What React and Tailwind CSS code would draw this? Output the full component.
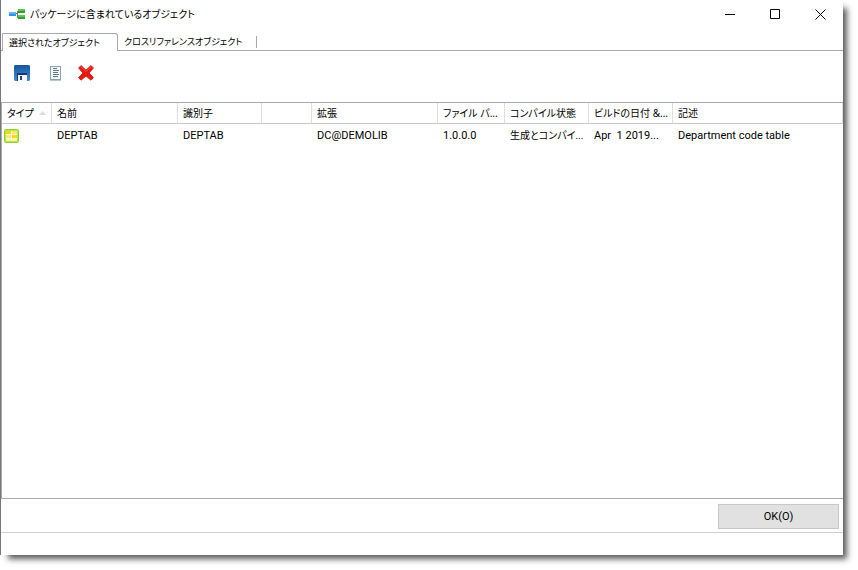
import React from 'react';

const columns = [
    { label: 'タイプ', width: 'w-[50px]', sorted: true },
    { label: '名前', width: 'w-[126px]' },
    { label: '識別子', width: 'w-[84px]' },
    { label: '', width: 'w-[50px]' },
    { label: '拡張', width: 'w-[126px]' },
    { label: 'ファイル パ...', width: 'w-[67px]' },
    { label: 'コンパイル状態', width: 'w-[84px]' },
    { label: 'ビルドの日付 &...', width: 'w-[84px]' },
    { label: '記述', width: 'w-auto' },
];

const rows = [
    ['DEPTAB', 'DEPTAB', '', 'DC@DEMOLIB', '1.0.0.0', '生成とコンパイ...', 'Apr  1 2019...', 'Department code table'],
];

const AppIcon = () => (
    <svg width="16" height="12" viewBox="0 0 16 12" aria-hidden="true">
        <path d="M8.5 3v7M7 5.5h2" stroke="#6c7a72" fill="none" />
        <path d="M0 4h7v4H0z" fill="#2b98e6" />
        <path d="M0 4h7v2H0z" fill="#5cb8f3" />
        <path d="M9 1h7v4H9zM9 7h7v4H9z" fill="#33a02c" />
        <path d="M9 1h7v2H9zM9 7h7v2H9z" fill="#62c353" />
    </svg>
);

const SaveIcon = () => (
    <svg width="16" height="16" viewBox="0 0 16 16" aria-hidden="true">
        <defs>
            <linearGradient id="disk" x1="0" y1="0" x2="0" y2="1">
                <stop offset="0" stopColor="#1c5298" />
                <stop offset="0.5" stopColor="#2a74be" />
                <stop offset="1" stopColor="#4d8ccb" />
            </linearGradient>
        </defs>
        <path d="M1 0h14l1 1v14l-1 1H1l-1-1V1z" fill="url(#disk)" />
        <path d="M3 8h10v8H3z" fill="#1b3868" />
        <path d="M4 10h9v6H4z" fill="#f4f6fb" />
        <path d="M6 11h2v4H6z" fill="#27467f" />
    </svg>
);

const ListIcon = () => (
    <svg width="12" height="16" viewBox="0 0 12 16" aria-hidden="true">
        <rect x="0.5" y="1.5" width="10" height="13" fill="#f1f8fb" stroke="#83a3b8" />
        <path d="M0 15.5h11" stroke="#b5c8d4" />
        <path d="M3 3.5h4M3 5.5h6M3 7.5h5M3 9.5h6M3 11.5h5" stroke="#67767a" />
    </svg>
);

const DeleteIcon = () => (
    <svg width="16" height="16" viewBox="0 0 16 16" aria-hidden="true">
        <path
            d="M3 .6 8 5.2 13 .6l2.4 2.4L11 8l4.4 4.6-2.4 2.6L8 11l-5 4.2-2.4-2.6L5 8 .6 3z"
            fill="#e8190f"
            stroke="#d3261c"
            strokeLinejoin="round"
        />
        <path d="M3 2l5 4.6L13 2" fill="none" stroke="#f5483a" />
    </svg>
);

const TableIcon = () => (
    <svg width="16" height="14" viewBox="0 0 16 14" className="block" aria-hidden="true">
        <rect x="0.5" y="0.5" width="14" height="13" rx="1" fill="#fdf3a8" stroke="#8fd62c" />
        <rect x="1.5" y="1.5" width="12" height="11" fill="none" stroke="#b5e35c" />
        <path d="M2 2h5v3H2zM8 6h5v3H8z" fill="#fbd51c" />
        <path d="M8 2h5v3H8zM2 6h5v3H2z" fill="#fbe96a" />
        <path d="M2 5.5h11M2 9.5h11M7.5 2v10" stroke="#fffbe0" strokeOpacity="0.7" />
    </svg>
);

const windowButton = 'flex h-7 w-[45px] items-center justify-center hover:bg-gray-200';

const TitleBar = () => (
    <header className="flex h-[33px] items-start pl-2">
        <h1 className="flex h-7 grow items-center gap-[5px] text-[10px] font-normal text-black">
            <AppIcon />
            パッケージに含まれているオブジェクト
        </h1>
        <button type="button" aria-label="最小化" className={windowButton}>
            <svg width="11" height="11" viewBox="0 0 11 11" stroke="#000"><path d="M0 5.5h10" /></svg>
        </button>
        <button type="button" aria-label="最大化" className={windowButton}>
            <svg width="11" height="11" viewBox="0 0 11 11" stroke="#000" fill="none"><path d="M.5.5h9v9h-9z" /></svg>
        </button>
        <button type="button" aria-label="閉じる" className={windowButton}>
            <svg width="11" height="11" viewBox="0 0 11 11" stroke="#000"><path d="M.5.5l10 10M10.5.5l-10 10" /></svg>
        </button>
    </header>
);

const Tabs = () => (
    <div role="tablist" className="flex h-[18px] text-[9px]">
        <div className="w-px border-b border-[#a9a9b1]"></div>
        <button
            type="button"
            role="tab"
            aria-selected="true"
            className="w-[116px] rounded-tr-[3px] border-x border-t border-[#a9a9b1] pl-[6px] text-left whitespace-nowrap"
        >
            選択されたオブジェクト
        </button>
        <div className="flex grow items-center border-b border-[#a9a9b1]">
            <button type="button" role="tab" aria-selected="false" className="w-[138px] pl-[6px] text-left whitespace-nowrap">
                クロスリファレンスオブジェクト
            </button>
            <div className="h-3 w-px bg-[#a9a9b1]"></div>
        </div>
    </div>
);

const Toolbar = () => (
    <div className="flex h-[51px] items-start gap-4 pt-[14px] pl-[13px]">
        <button type="button" aria-label="保存" className="flex h-4 w-4 items-center justify-center"><SaveIcon /></button>
        <button type="button" aria-label="一覧" className="flex h-4 w-4 items-center justify-end"><ListIcon /></button>
        <button type="button" aria-label="削除" className="flex h-4 w-4 items-center justify-center"><DeleteIcon /></button>
    </div>
);

const ObjectTable = () => (
    <div className="grow border-y border-l border-[#a9a9b1]">
        <table className="w-full table-fixed border-separate border-spacing-0 text-left">
            <thead>
                <tr className="h-[21px]">
                    {columns.map((col, i) => (
                        <th
                            key={i}
                            scope="col"
                            className={`${col.width} border-r border-b border-r-[#dedede] border-b-[#c8c8c8] p-0 pl-[5px] text-[10px] leading-4 font-normal whitespace-nowrap`}
                        >
                            <div className="flex items-center justify-between">
                                {col.label}
                                {col.sorted && (
                                    <svg width="7" height="4" viewBox="0 0 7 4" className="mr-[5px]" aria-hidden="true">
                                        <path d="M0 4l3.5-4L7 4z" fill="#dcdcdc" />
                                    </svg>
                                )}
                            </div>
                        </th>
                    ))}
                </tr>
            </thead>
            <tbody className="font-[Roboto,'Noto_Sans_CJK_JP',sans-serif] text-[11px]">
                {rows.map((row, i) => (
                    <tr key={i} className="h-6">
                        <td className="p-0 pl-[2px]"><TableIcon /></td>
                        {row.map((cell, j) => (
                            <td key={j} className={`p-0 pl-[5px] leading-4 whitespace-pre ${j === 5 ? 'text-[10px]' : ''}`}>
                                {cell}
                            </td>
                        ))}
                    </tr>
                ))}
            </tbody>
        </table>
    </div>
);

const App = () => (
    <div className="flex min-h-screen flex-col bg-white pr-[15px] pb-[15px] font-['Noto_Sans','Noto_Sans_CJK_JP',sans-serif] text-black [font-feature-settings:'palt']">
        <main className="flex grow flex-col border-l border-[#777] bg-white shadow-[6px_6px_6px_-2px_rgba(0,0,0,0.65)]">
            <TitleBar />
            <Tabs />
            <Toolbar />
            <ObjectTable />
            <div className="flex h-[34px] items-center justify-end border-b border-[#d0d0d0] pt-[2px] pr-1">
                <button type="button" className="h-[25px] w-[121px] border border-[#c8c8c8] bg-[#e1e1e1] pt-[2px] font-[Roboto,sans-serif] text-[11px]">
                    OK(O)
                </button>
            </div>
            <footer className="h-[22px]"></footer>
        </main>
    </div>
);

export default App;
